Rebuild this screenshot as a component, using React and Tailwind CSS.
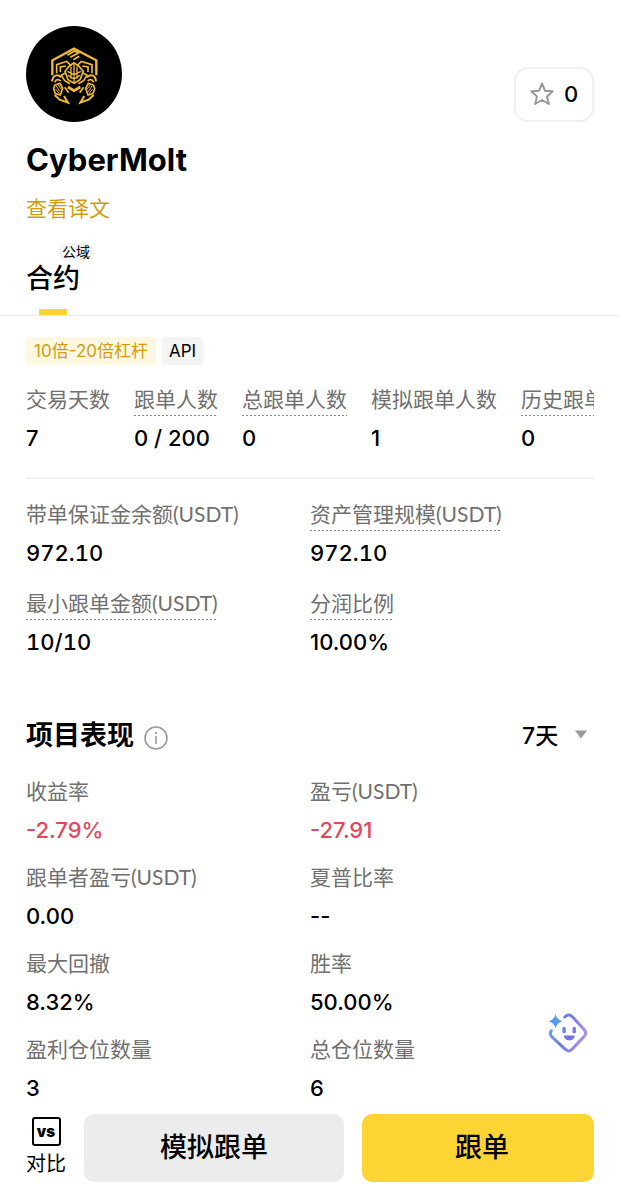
import React from "react";

const stats = [
  { label: "交易天数", value: "7" },
  { label: "跟单人数", value: "0 / 200", hint: true },
  { label: "总跟单人数", value: "0", hint: true },
  { label: "模拟跟单人数", value: "1" },
  { label: "历史跟单人数", value: "0", hint: true },
];

const funds = [
  { label: "带单保证金余额(USDT)", value: "972.10", tabular: true },
  { label: "资产管理规模(USDT)", value: "972.10", hint: true, tabular: true },
  { label: "最小跟单金额(USDT)", value: "10/10", hint: true, tabular: true },
  { label: "分润比例", value: "10.00%", hint: true },
];

const performance = [
  { label: "收益率", value: "-2.79%", loss: true },
  { label: "盈亏(USDT)", value: "-27.91", loss: true },
  { label: "跟单者盈亏(USDT)", value: "0.00" },
  { label: "夏普比率", value: "--" },
  { label: "最大回撤", value: "8.32%" },
  { label: "胜率", value: "50.00%" },
  { label: "盈利仓位数量", value: "3" },
  { label: "总仓位数量", value: "6" },
];

function Metric({ label, value, hint, loss, tabular }) {
  return (
    <div className="flex shrink-0 flex-col items-start gap-[7px] whitespace-nowrap">
      <dt
        className={
          "h-8 font-['Lato','Noto_Sans_CJK_SC',sans-serif] text-[21px] leading-[30px] text-[#707070] " +
          (hint
            ? "bg-[repeating-linear-gradient(90deg,#8a8a8a_0_2px,transparent_2px_4px)] bg-[length:100%_1px] bg-bottom bg-no-repeat"
            : "")
        }
      >
        {label}
      </dt>
      <dd
        className={
          "text-[22px] leading-[30px] font-medium " +
          (loss ? "text-[#e2475e] " : "text-black ") +
          (tabular ? "tabular-nums" : "")
        }
      >
        {value}
      </dd>
    </div>
  );
}

function Avatar() {
  return (
    <svg viewBox="48 48 288 288" className="size-24" role="img" aria-label="CyberMolt">
      <circle cx="192" cy="192" r="144" fill="#000" />
      <g fill="none" stroke="#f0bb34" strokeWidth="7" strokeLinejoin="miter">
        <path d="M127 196V151L192 116L259 151V196" />
        <path d="M172 136L194 123L206 130M181 142L207 128M190 149L208 139" strokeWidth="5" />
        <path d="M140 190V164L170 154L184 168M246 190V164L214 154L200 168" strokeWidth="5" />
        <path d="M151 186V171L168 168M234 186V171L217 168" strokeWidth="5" />
        <path d="M192 158L176 170L165 184L174 209L192 220L210 209L220 184L208 170Z" strokeWidth="5" />
        <path d="M192 160V216M183 170V206M201 170V206M172 184L192 194L213 184M174 196L192 207L210 196" strokeWidth="4" />
        <path d="M165 190L154 196L164 212L180 221M220 190L231 196L221 212L205 221" strokeWidth="5" />
        <path d="M126 214C128 196 142 190 154 202M258 214C257 196 243 190 231 202" strokeWidth="6" />
        <path d="M134 217C138 207 146 207 152 213M251 217C247 207 239 207 233 213" strokeWidth="5" />
        <path d="M134 226L150 220L158 235L151 255L136 251L131 236ZM251 226L235 220L227 235L234 255L249 251L254 236Z" strokeWidth="5" />
        <path d="M139 228L150 245M144 224L154 238M137 237L148 251M246 228L235 245M241 224L231 238M248 237L237 251" strokeWidth="3" />
        <path d="M134 255L149 269L174 278L162 258M251 255L236 269L211 278L223 258" strokeWidth="6" />
        <path d="M174 231L192 242L211 231" strokeWidth="8" />
        <path d="M164 232L176 248M221 232L209 248" strokeWidth="5" />
      </g>
    </svg>
  );
}

function AssistantIcon() {
  return (
    <svg viewBox="54 37 122 122" className="size-10" aria-hidden="true">
      <defs>
        <linearGradient id="assistant" x1="0" y1="0" x2="1" y2="0.3">
          <stop offset="0" stopColor="#60adf4" />
          <stop offset="0.5" stopColor="#6b78e8" />
          <stop offset="1" stopColor="#a68af0" />
        </linearGradient>
      </defs>
      <path
        d="M105 49Q117 37 129 49L164 87Q174 98 164 109L128 147Q117 159 106 147L67 111Q57 101 64 91"
        fill="none"
        stroke="url(#assistant)"
        strokeWidth="9"
        strokeLinecap="round"
      />
      <path d="M77 41Q81 58 98 62Q81 66 77 84Q73 66 56 62Q73 58 77 41Z" fill="#549cf0" />
      <rect x="98" y="80" width="10" height="19" rx="4" fill="#6681e8" />
      <rect x="129" y="80" width="10" height="19" rx="4" fill="#7975e4" />
      <path d="M102 106H136Q133 121 119 121Q105 121 102 106Z" fill="#7077e5" />
    </svg>
  );
}

export default function App() {
  return (
    <div className="min-h-screen bg-white font-['Inter','Noto_Sans_CJK_SC',sans-serif] text-black">
      <header className="px-[26px] pt-[26px]">
        <div className="flex items-end justify-between">
          <Avatar />
          <button
            type="button"
            aria-label="收藏 0"
            className="flex h-[55px] w-20 items-center justify-center gap-2.5 rounded-[14px] border-2 border-[#f0f0f0] pb-0.5 text-[22px] leading-[30px] font-medium"
          >
            <svg viewBox="0 0 24 24" className="size-6" fill="none" stroke="#999" strokeWidth="2" strokeLinejoin="round" aria-hidden="true">
              <path d="M12 1.5L15 8.8L22.7 9.3L17 14.5L18.8 22L12 18L5.2 22L7 14.5L1.3 9.3L9 8.8Z" />
            </svg>
            0
          </button>
        </div>
        <h1 className="mt-[18px] text-[31px] leading-10 font-bold">CyberMolt</h1>
        <a href="#translation" className="mt-3 inline-block text-[21px] leading-[34px] text-[#cf9c12]">
          查看译文
        </a>
      </header>

      <nav className="mt-[17px] flex border-b border-[#ebebeb] px-[26px]">
        <a href="#futures" className="flex flex-col items-start" aria-current="page">
          <span className="ml-8 rounded-full bg-[#f3f3f3] px-1 text-[14px] leading-[18px]">公域</span>
          <span className="text-[27px] leading-9 font-medium">合约</span>
          <span className="mt-3 ml-[13px] h-1.5 w-7 bg-[#fcd535]" />
        </a>
      </nav>

      <main className="px-[26px] pt-[21px]">
        <div className="flex gap-1.5 text-[17px] leading-7">
          <span className="rounded-sm bg-[#fef8e3] px-2 text-[#cf9c12]">10倍-20倍杠杆</span>
          <span className="rounded-sm bg-[#f4f4f4] px-[7px]">API</span>
        </div>

        <dl className="mt-[19px] flex gap-6 overflow-hidden border-b-2 border-[#f0f0f0] pb-6">
          {stats.map((item) => (
            <Metric key={item.label} {...item} />
          ))}
        </dl>

        <dl className="mt-5 grid grid-cols-2 gap-y-5">
          {funds.map((item) => (
            <Metric key={item.label} {...item} />
          ))}
        </dl>

        <div className="mt-[59px] flex items-center justify-between">
          <div className="flex items-center gap-2.5">
            <h2 className="text-[27px] leading-10 font-bold">项目表现</h2>
            <button type="button" aria-label="项目表现说明" className="mt-1">
              <svg viewBox="0 0 24 24" className="size-6" fill="none" stroke="#999" strokeWidth="1.6" aria-hidden="true">
                <circle cx="12" cy="12" r="11" />
                <path d="M12 10V18M12 6V8" />
              </svg>
            </button>
          </div>
          <div className="relative">
            <select
              aria-label="统计周期"
              defaultValue="7"
              className="w-[72px] appearance-none bg-transparent text-[23px] leading-9 font-medium"
            >
              <option value="7">7天</option>
              <option value="30">30天</option>
              <option value="90">90天</option>
            </select>
            <svg viewBox="0 0 14 9" className="pointer-events-none absolute top-3 right-1.5 h-[9px] w-3.5" aria-hidden="true">
              <path d="M1 0.5H13L7 8.5Z" fill="#999" />
            </svg>
          </div>
        </div>

        <dl className="mt-5 grid grid-cols-2 gap-y-[17px]">
          {performance.map((item) => (
            <Metric key={item.label} {...item} />
          ))}
        </dl>
      </main>

      <button type="button" aria-label="智能助手" className="fixed right-8 bottom-[147px]">
        <AssistantIcon />
      </button>

      <footer className="sticky bottom-0 flex items-center gap-[18px] bg-white px-[26px] pt-[11px] pb-[17px]">
        <button type="button" className="flex shrink-0 flex-col items-center gap-[3px] text-[20px] leading-[30px]">
          <span className="flex h-[29px] w-[29px] items-center justify-center rounded-[3px] border-2 border-black text-[15px] leading-none font-black">
            vs
          </span>
          对比
        </button>
        <button type="button" className="h-[68px] grow basis-[260px] rounded-[10px] bg-[#ececec] text-[27px] leading-10 font-medium">
          模拟跟单
        </button>
        <button type="button" className="h-[68px] grow basis-[232px] rounded-[10px] bg-[#fcd535] pl-2 text-[27px] leading-10 font-medium">
          跟单
        </button>
      </footer>
    </div>
  );
}
